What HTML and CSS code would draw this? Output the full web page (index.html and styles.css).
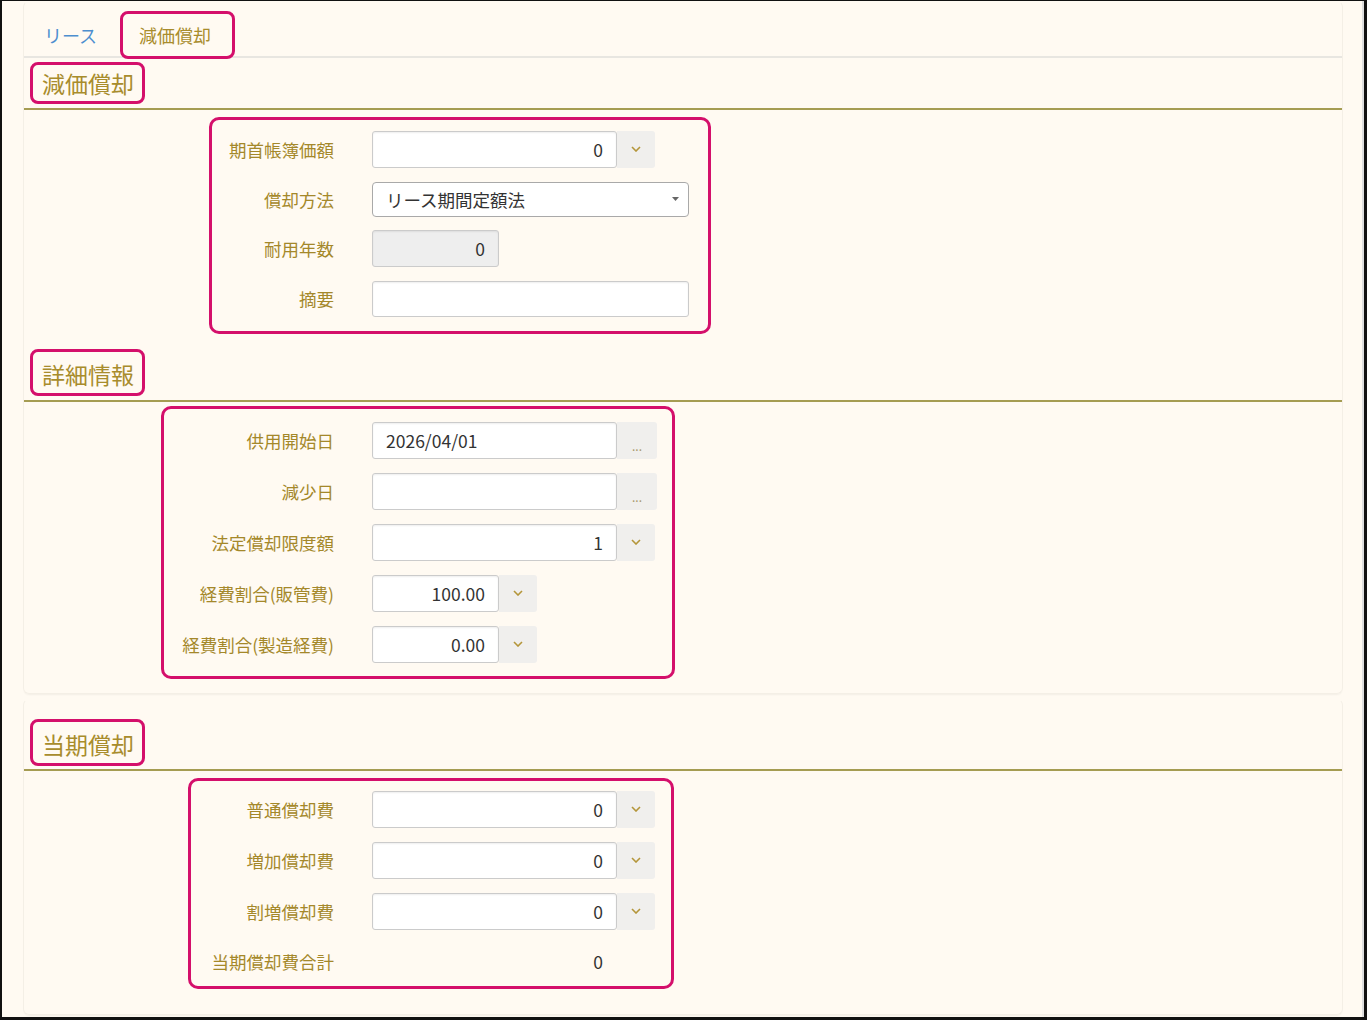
FILE: index.html
```html
<!DOCTYPE html>
<html lang="ja">
<head>
    <meta charset="UTF-8">
    <title>減価償却</title>
    <link rel="stylesheet" href="styles.css">
</head>
<body>
    <div class="frame">
        <div class="page">

            <div class="card card-top">
                <ul class="tabs">
                    <li class="tab">リース</li>
                    <li class="tab active">減価償却</li>
                </ul>

                <div class="sec-head sec-first"><span class="hl">減価償却</span></div>

                <div class="group g1">
                    <div class="row">
                        <label class="lbl">期首帳簿価額</label>
                        <input class="inp num" type="text" value="0">
                        <span class="addon"><svg width="10" height="6" viewBox="0 0 10 6"><polyline points="1,1 5,5 9,1" /></svg></span>
                    </div>
                    <div class="row">
                        <label class="lbl">償却方法</label>
                        <div class="select">
                            <span>リース期間定額法</span>
                            <svg class="caret" width="7" height="4" viewBox="0 0 7 4"><polygon points="0,0 7,0 3.5,4" /></svg>
                        </div>
                    </div>
                    <div class="row">
                        <label class="lbl">耐用年数</label>
                        <input class="inp num short" type="text" value="0" readonly>
                    </div>
                    <div class="row">
                        <label class="lbl">摘要</label>
                        <input class="inp wide" type="text" value="">
                    </div>
                </div>

                <div class="sec-head"><span class="hl">詳細情報</span></div>

                <div class="group g2">
                    <div class="row">
                        <label class="lbl">供用開始日</label>
                        <input class="inp date" type="text" value="2026/04/01">
                        <span class="addon dots">...</span>
                    </div>
                    <div class="row">
                        <label class="lbl">減少日</label>
                        <input class="inp date" type="text" value="">
                        <span class="addon dots">...</span>
                    </div>
                    <div class="row">
                        <label class="lbl">法定償却限度額</label>
                        <input class="inp num" type="text" value="1">
                        <span class="addon"><svg width="10" height="6" viewBox="0 0 10 6"><polyline points="1,1 5,5 9,1" /></svg></span>
                    </div>
                    <div class="row">
                        <label class="lbl">経費割合(販管費)</label>
                        <input class="inp num ratio" type="text" value="100.00">
                        <span class="addon thin"><svg width="10" height="6" viewBox="0 0 10 6"><polyline points="1,1 5,5 9,1" /></svg></span>
                    </div>
                    <div class="row">
                        <label class="lbl">経費割合(製造経費)</label>
                        <input class="inp num ratio" type="text" value="0.00">
                        <span class="addon thin"><svg width="10" height="6" viewBox="0 0 10 6"><polyline points="1,1 5,5 9,1" /></svg></span>
                    </div>
                </div>
            </div>

            <div class="card card-bottom">
                <div class="sec-head sec-last"><span class="hl">当期償却</span></div>

                <div class="group g3">
                    <div class="row">
                        <label class="lbl">普通償却費</label>
                        <input class="inp num" type="text" value="0">
                        <span class="addon"><svg width="10" height="6" viewBox="0 0 10 6"><polyline points="1,1 5,5 9,1" /></svg></span>
                    </div>
                    <div class="row">
                        <label class="lbl">増加償却費</label>
                        <input class="inp num" type="text" value="0">
                        <span class="addon"><svg width="10" height="6" viewBox="0 0 10 6"><polyline points="1,1 5,5 9,1" /></svg></span>
                    </div>
                    <div class="row">
                        <label class="lbl">割増償却費</label>
                        <input class="inp num" type="text" value="0">
                        <span class="addon"><svg width="10" height="6" viewBox="0 0 10 6"><polyline points="1,1 5,5 9,1" /></svg></span>
                    </div>
                    <div class="row row-total">
                        <label class="lbl">当期償却費合計</label>
                        <span class="total">0</span>
                    </div>
                </div>
            </div>

        </div>
    </div>
</body>
</html>
```

FILE: styles.css
```css
body {
    margin: 0;
    background-color: #ffffff;
    font-family: "Noto Sans CJK JP", "Noto Sans", sans-serif;
}

.frame {
    width: 1367px;
    height: 1020px;
    box-sizing: border-box;
    border: 1px solid #111;
    border-left-width: 2px;
    border-right-width: 3px;
    border-bottom-width: 3px;
    overflow: hidden;
    background-color: #fffaf2;
}

.page {
    height: 100%;
    box-sizing: border-box;
    border-right: 2px solid #dedede;
    padding: 0 19px 0 21px;
}

/* cards */

.card {
    border: 1px solid #f4efe6;
    border-top-color: transparent;
    border-radius: 6px;
    box-shadow: 0 2px 2px -1px rgba(0, 0, 0, 0.05);
}

.card-top {
    padding-bottom: 14px;
}

.card-bottom {
    margin-top: 5px;
    padding-bottom: 25px;
}

/* tabs */

.tabs {
    display: flex;
    list-style: none;
    margin: 9px 0 0 0;
    padding: 0;
    border-bottom: 2px solid #e8e6e1;
}

.tab {
    height: 48px;
    box-sizing: border-box;
    margin-bottom: -3px;
    border: 3px solid transparent;
    border-radius: 8px;
    padding: 2px 20px 0 17px;
    font-size: 18px;
    line-height: 38px;
    color: #4d8fcf;
}

.tab.active {
    border-color: #d40f6b;
    padding-left: 16px;
    padding-right: 21px;
    color: #a88c2c;
}

/* section headers */

.sec-head {
    display: flex;
    margin-top: 15px;
    padding: 0 0 4px 6px;
    border-bottom: 2px solid #a59c52;
}

.sec-first {
    margin-top: 0;
    padding-top: 4px;
}

.sec-last {
    margin-top: 0;
    padding-top: 19px;
    padding-bottom: 3px;
}

.hl {
    display: inline-block;
    border: 3px solid #d40f6b;
    border-radius: 8px;
    padding: 3px 8px 0 9px;
    font-size: 23px;
    line-height: 38px;
    color: #a88c2c;
}

.sec-first .hl {
    padding-top: 0;
    line-height: 36px;
}

/* field groups */

.group {
    box-sizing: border-box;
    border: 3px solid #d40f6b;
    border-radius: 10px;
}

.g1 {
    width: 502px;
    margin: 7px 0 0 185px;
    padding: 4.5px 0 7px 0;
}

.g1 .row {
    height: 49.8px;
}

.g1 .lbl {
    width: 122px;
}

.g2 {
    width: 514px;
    margin: 4px 0 0 137px;
    padding: 6px 0 6px 0;
}

.g2 .lbl {
    width: 170px;
}

.g3 {
    width: 486px;
    margin: 7px 0 0 164px;
    padding: 3px 0 0 0;
}

.g3 .lbl {
    width: 143px;
}

.row {
    display: flex;
    align-items: center;
    height: 51px;
}

.row-total {
    height: 49px;
}

.lbl {
    flex: none;
    margin-right: 38px;
    text-align: right;
    font-size: 17.5px;
    color: #a4882a;
    white-space: nowrap;
}

/* controls */

.inp {
    box-sizing: border-box;
    width: 245px;
    height: 37px;
    margin: 0;
    border: 1px solid #cbcbcb;
    border-radius: 3px;
    padding: 0 13px;
    background-color: #ffffff;
    box-shadow: inset 0 1px 2px rgba(0, 0, 0, 0.07);
    font-family: "Noto Sans CJK JP", "Noto Sans", sans-serif;
    font-size: 17.5px;
    color: #333333;
    outline: none;
}

.num {
    text-align: right;
}

.short,
.ratio {
    width: 127px;
}

.short {
    background-color: #eeeeee;
}

.wide {
    width: 317px;
    height: 36px;
}

.addon {
    display: flex;
    align-items: center;
    justify-content: center;
    width: 38px;
    height: 37px;
    border-radius: 0 3px 3px 0;
    background-color: #f0efed;
}

.addon svg polyline {
    fill: none;
    stroke: #b4963a;
    stroke-width: 1.6;
}

.dots {
    width: 40px;
    align-items: flex-end;
    box-sizing: border-box;
    padding-bottom: 7px;
    font-size: 12px;
    line-height: 12px;
    color: #a8996c;
}

.select {
    display: flex;
    align-items: center;
    justify-content: space-between;
    box-sizing: border-box;
    width: 317px;
    height: 35px;
    border: 1px solid #a9a9a9;
    border-radius: 4px;
    padding: 0 9px 0 13px;
    background-color: #ffffff;
    font-size: 17.5px;
    color: #333333;
}

.caret polygon {
    fill: #666666;
}

.total {
    width: 231px;
    text-align: right;
    font-size: 17.5px;
    color: #333333;
}
```
